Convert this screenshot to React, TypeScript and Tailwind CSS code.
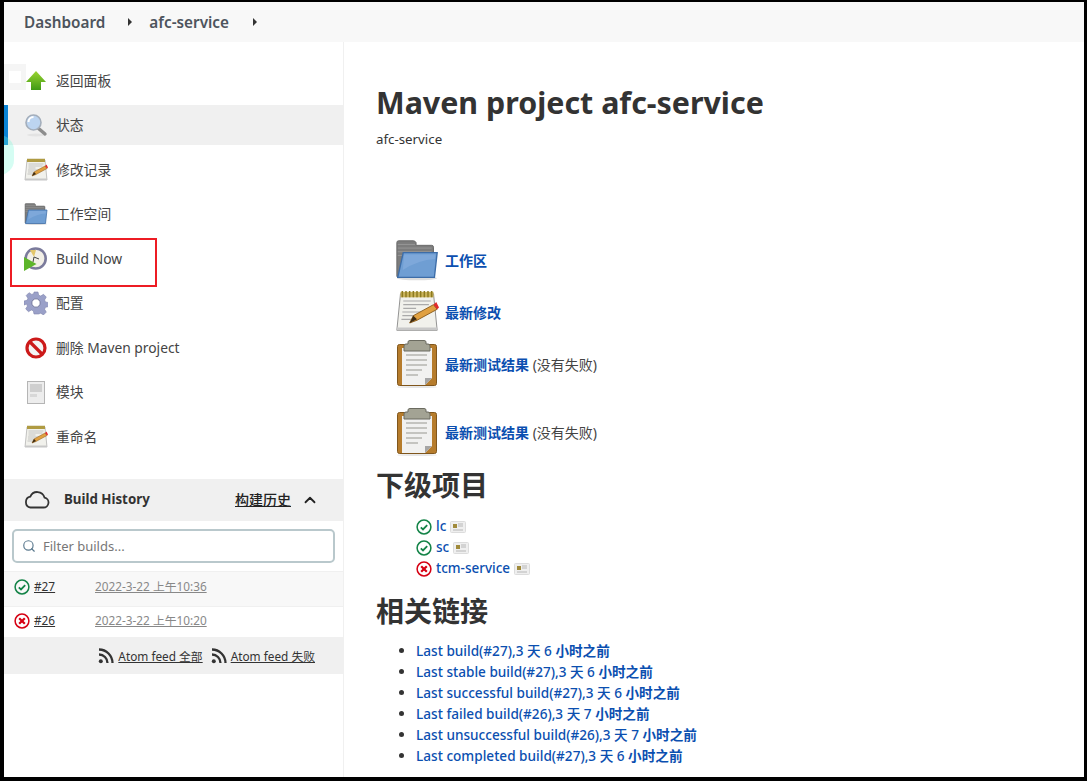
import React from "react";
import { ChevronUp, Search } from "lucide-react";

const font = { fontFamily: '"Noto Sans", "Noto Sans CJK SC", sans-serif' };

function Folder({ size = 24 }: { size?: number }) {
  return (
    <svg width={size} height={size} viewBox="0 0 48 48">
      <ellipse cx="24" cy="44" rx="22" ry="2" fill="#ddd" />
      <path d="M2 5q0-2 2-2h16q2 0 3 2v3h17q2 0 2 2v32H2z" fill="#7c7c7c" stroke="#666" />
      <path d="M3 7h19M3 11h37M3 15h37M3 19h37" stroke="#999" strokeWidth="1" />
      <path d="M9 16h37l-3 27H3z" fill="#6f9ed3" stroke="#3d6da8" strokeWidth="1.5" />
      <path d="M10 18h34l-.5 5q-18 1-35 12z" fill="#7ea8da" />
    </svg>
  );
}

function Notepad({ size = 24 }: { size?: number }) {
  return (
    <svg width={size} height={size} viewBox="0 0 48 48">
      <path d="M6 4h36l4 40H2z" fill="#f1f1ec" stroke="#8a8a8a" />
      <path d="M2 41h44v3H2z" fill="#c8c8c8" />
      <rect x="6" y="2" width="36" height="6" fill="#c9b25a" />
      <path d="M8 1v7M12 1v7M16 1v7M20 1v7M24 1v7M28 1v7M32 1v7M36 1v7M40 1v7" stroke="#8c7a20" strokeWidth="1.6" />
      <path d="M9 12h30M9 16h28M9 20h14M8 24h22M8 28h16M7 32h14" stroke="#aaa" strokeWidth="1.2" />
      <path d="M16 36l4-8 22-12 4 5-22 12z" fill="#e0a040" stroke="#8a5a18" />
      <path d="M42 16l4 5 2-2-3-6z" fill="#e02a2a" />
      <path d="M16 36l4-8 4 4z" fill="#3a2a14" />
    </svg>
  );
}

function Clipboard() {
  return (
    <svg width="48" height="48" viewBox="0 0 48 48" className="-mx-[2px] shrink-0">
      <ellipse cx="24" cy="47" rx="20" ry="1" fill="#e6e6e6" />
      <rect x="4.500" y="4.500" width="39" height="41" rx="2" fill="#b67c2c" stroke="#80561c" />
      <path d="M9 8h30v30l-7 7H9z" fill="#f1f1f0" />
      <path d="M32 45l7-7h-7z" fill="#a5a5a5" />
      <path d="M13 15h21M13 20h21M13 25h21M13 30h16M13 35h12" stroke="#c4c4c0" strokeWidth="2" />
      <path d="M15 2q0-1.500 2-1.500h14q2 0 2 1.500v2h2q2 0 2 2v5H11V6q0-2 2-2h2z" fill="#a3a394" stroke="#6b6b60" />
    </svg>
  );
}

function ArrowUp() {
  return (
    <svg width="24" height="24" viewBox="0 0 24 24">
      <defs>
        <linearGradient id="gu" x1="0" y1="0" x2="0" y2="1">
          <stop offset="0" stopColor="#9bd432" />
          <stop offset="1" stopColor="#3f9a15" />
        </linearGradient>
      </defs>
      <path d="M12 2l10 11h-5v8H7v-8H2z" fill="url(#gu)" />
    </svg>
  );
}

function Magnifier() {
  return (
    <svg width="24" height="24" viewBox="0 0 24 24">
      <ellipse cx="12" cy="22" rx="9" ry="1.500" fill="#e3e3e3" />
      <path d="M14 15l7 6" stroke="#8d8d8d" strokeWidth="3.400" strokeLinecap="round" />
      <circle cx="9.500" cy="9.500" r="7.500" fill="#bcd4f0" stroke="#a4aebb" strokeWidth="1.600" />
      <path d="M4.500 9a5 5 0 0 1 5-5" stroke="#fff" strokeWidth="2" fill="none" />
    </svg>
  );
}

function BuildClock() {
  return (
    <svg width="24" height="24" viewBox="0 0 24 24">
      <circle cx="11.700" cy="11.500" r="10" fill="#f2efe6" stroke="#7b7b9c" strokeWidth="2.600" />
      <path d="M6 3h6l-2 7z" fill="#e3c66a" />
      <path d="M10 10l5 2M10 10l-1 5" stroke="#444" strokeWidth="1" />
      <path d="M0 10l12.500 7L0 24z" fill="#5db52a" />
    </svg>
  );
}

function Gear() {
  return (
    <svg width="24" height="24" viewBox="0 0 24 24">
      <path
        d="M10 1h4l.7 3.200 2 .8 2.800-1.700 2.800 2.800-1.700 2.800.8 2 3.100.7v4l-3.100.7-.8 2 1.700 2.800-2.800 2.800-2.800-1.700-2 .8L14 23h-4l-.7-3.200-2-.8-2.800 1.700-2.800-2.800 1.700-2.800-.8-2L0 14v-4l3.100-.7.800-2L2.200 4.500l2.800-2.800 2.800 1.700 2-.8z"
        fill="#9aa0c8"
        stroke="#8085ad"
        strokeWidth=".6"
      />
      <circle cx="12" cy="12" r="4.200" fill="#fff" stroke="#777ba0" />
    </svg>
  );
}

function NoEntry() {
  return (
    <svg width="24" height="24" viewBox="0 0 24 24">
      <circle cx="12" cy="12" r="9" fill="#f4f4f4" stroke="#cc1a1a" strokeWidth="3.200" />
      <path d="M5.500 5.500l13 13" stroke="#cc1a1a" strokeWidth="3.200" />
    </svg>
  );
}

function ModuleIcon() {
  return (
    <svg width="24" height="24" viewBox="0 0 24 24">
      <rect x="3.500" y="1.500" width="17" height="22" fill="#ededed" stroke="#b5b5b5" />
      <rect x="6" y="4" width="12" height="8" fill="#cfcfcf" />
      <rect x="6" y="14" width="7" height="3" fill="#d8d8d8" />
    </svg>
  );
}

function Cloud() {
  return (
    <svg width="26" height="18" viewBox="0 0 26 18" fill="none">
      <path
        d="M6.500 16.500h13a5 5 0 0 0 1-9.900 7.500 7.500 0 0 0-14.200-.9A5.500 5.500 0 0 0 6.500 16.500z"
        stroke="#333"
        strokeWidth="1.800"
      />
    </svg>
  );
}

function StatusOk({ className = "" }: { className?: string }) {
  return (
    <svg width="16" height="16" viewBox="0 0 16 16" fill="none" className={"shrink-0 " + className}>
      <circle cx="8" cy="8" r="6.900" stroke="#138347" strokeWidth="1.500" />
      <path d="M4.800 8.300l2.200 2.100 4.200-4.300" stroke="#138347" strokeWidth="1.800" />
    </svg>
  );
}

function StatusFail({ className = "" }: { className?: string }) {
  return (
    <svg width="16" height="16" viewBox="0 0 16 16" fill="none" className={"shrink-0 " + className}>
      <circle cx="8" cy="8" r="6.900" stroke="#d60013" strokeWidth="1.500" />
      <path d="M5.200 5.200l5.600 5.600M10.800 5.200l-5.600 5.600" stroke="#d60013" strokeWidth="2.200" />
    </svg>
  );
}

function Rss() {
  return (
    <svg width="16" height="16" viewBox="0 0 16 16" fill="none" className="shrink-0">
      <circle cx="2.800" cy="13.200" r="2" fill="#333" />
      <path d="M1 6.500a8.500 8.500 0 0 1 8.500 8.500" stroke="#333" strokeWidth="2.300" />
      <path d="M1 1.500A13.500 13.500 0 0 1 14.500 15" stroke="#333" strokeWidth="2.300" />
    </svg>
  );
}

function Badge() {
  return (
    <svg width="16" height="12" viewBox="0 0 16 12" className="shrink-0">
      <rect x=".5" y=".5" width="15" height="11" rx="1" fill="#efefef" stroke="#dcdcdc" />
      <rect x="3" y="3" width="4" height="4" fill="#a08a3a" />
      <path d="M8 3h5M8 5h5M3 9h10" stroke="#aaa" strokeWidth=".8" />
    </svg>
  );
}

const tasks: { icon: React.ReactNode; label: string; active?: boolean }[] = [
  { icon: <ArrowUp />, label: "返回面板" },
  { icon: <Magnifier />, label: "状态", active: true },
  { icon: <Notepad />, label: "修改记录" },
  { icon: <Folder />, label: "工作空间" },
  { icon: <BuildClock />, label: "Build Now" },
  { icon: <Gear />, label: "配置" },
  { icon: <NoEntry />, label: "删除 Maven project" },
  { icon: <ModuleIcon />, label: "模块" },
  { icon: <Notepad />, label: "重命名" },
];

const links = [
  "Last build(#27),3 天 6 ",
  "Last stable build(#27),3 天 6 ",
  "Last successful build(#27),3 天 6 ",
  "Last failed build(#26),3 天 7 ",
  "Last unsuccessful build(#26),3 天 7 ",
  "Last completed build(#27),3 天 6 ",
];

export default function App() {
  return (
    <div style={font} className="h-[781px] w-[1087px] overflow-hidden bg-black pt-[2px] pl-[4px] pr-[3px] pb-[4px]">
      <div className="relative flex h-full flex-col overflow-hidden bg-white text-[#333]">
        <header className="flex h-[40px] shrink-0 items-center bg-[#f8f8f8] pl-[20px] text-[15.300px] font-semibold text-[#4d545d]">
          <span>Dashboard</span>
          <span className="ml-[23px] h-0 w-0 border-y-[4px] border-l-[4px] border-y-transparent border-l-[#333]" />
          <span className="ml-[17px]">afc-service</span>
          <span className="ml-[24px] h-0 w-0 border-y-[4px] border-l-[4px] border-y-transparent border-l-[#333]" />
        </header>
        <div className="flex min-h-0 flex-1">
          <aside className="w-[340px] shrink-0 border-r border-[#f0f0f0] pt-[18.600px]">
            <nav className="flex flex-col gap-[4.500px]">
              {tasks.map((t) => (
                <div
                  key={t.label}
                  className={
                    t.active
                      ? "flex h-[40px] items-center gap-[8px] border-l-[4px] border-[#0a84d6] bg-[#f0f0f0] pl-[16px] text-[13.800px] text-[#444]"
                      : "flex h-[40px] items-center gap-[8px] pl-[20px] text-[13.800px] text-[#444]"
                  }
                >
                  {t.icon}
                  <span className="pt-[1px]">{t.label}</span>
                </div>
              ))}
            </nav>
            <div className="mt-[22.400px] flex h-[42px] items-center bg-[#f0f0f0] pl-[20px] pr-[24px] text-[13.300px]">
              <Cloud />
              <span className="ml-[14px] -mt-[1px] font-bold text-[#333]">Build History</span>
              <span className="ml-auto -mt-[1px] text-[14px] font-medium text-[#222] underline">构建历史</span>
              <ChevronUp size={18} strokeWidth={2.400} className="ml-[10px] text-[#222]" />
            </div>
            <div className="px-[8px] pt-[8px] pb-[8px]">
              <div className="flex h-[34px] w-[323px] items-center rounded-[5px] border-2 border-[#b9c8cc] bg-white pl-[8px] text-[13px] text-[#777]">
                <Search size={14} strokeWidth={2} className="text-[#5c7a8f]" />
                <span className="ml-[7px] pt-[1px]">Filter builds...</span>
              </div>
            </div>
            <div className="flex h-[35px] items-start border-t border-[#f0f0f0] bg-[#f8f8f8] pl-[10px] pt-[6px] text-[11.800px]">
              <StatusOk className="mt-[1px]" />
              <span className="ml-[4px] w-[61px] leading-[16px] underline">#27</span>
              <span className="leading-[16px] text-[#888] underline">2022-3-22 上午10:36</span>
            </div>
            <div className="flex h-[31px] items-start border-t border-[#f0f0f0] pl-[10px] pt-[5px] text-[11.800px]">
              <StatusFail className="mt-[1px]" />
              <span className="ml-[4px] w-[61px] leading-[16px] underline">#26</span>
              <span className="leading-[16px] text-[#888] underline">2022-3-22 上午10:20</span>
            </div>
            <div className="flex h-[37px] items-center justify-end bg-[#f0f0f0] pt-[2px] pr-[28px] text-[11.800px] text-[#333]">
              <Rss />
              <span className="ml-[4px] underline">Atom feed 全部</span>
              <span className="ml-[8px]"><Rss /></span>
              <span className="ml-[4px] underline">Atom feed 失败</span>
            </div>
          </aside>
          <main className="min-w-0 flex-1 pl-[32px]">
            <h1 className="mt-[41px] text-[30.400px] leading-[40px] font-bold text-[#333]">Maven project afc-service</h1>
            <p className="mt-[6px] text-[13.300px] leading-[20px] text-[#333]">afc-service</p>
            <div className="mt-[85px] ml-[19px] flex flex-col">
              {[
                { icon: <Folder size={44} />, label: "工作区", h: 52 },
                { icon: <Notepad size={44} />, label: "最新修改", h: 52 },
                { icon: <Clipboard />, label: "最新测试结果", note: " (没有失败)", h: 68, pb: 16 },
                { icon: <Clipboard />, label: "最新测试结果", note: " (没有失败)", h: 52 },
              ].map((r, i) => (
                <div key={i} style={{ height: r.h, paddingBottom: r.pb ?? 0 }} className="flex items-center gap-[6px] text-[14px]">
                  {r.icon}
                  <span>
                    <span className="font-bold text-[#0b4fb0]">{r.label}</span>
                    {r.note && <span className="text-[#444]">{r.note}</span>}
                  </span>
                </div>
              ))}
            </div>
            <h2 className="mt-[9px] text-[28px] leading-[36px] font-bold text-[#333]">下级项目</h2>
            <div className="mt-[13px] ml-[40px] flex flex-col text-[13.500px] font-medium text-[#0b4fb0]">
              {[
                { n: "lc", ok: true },
                { n: "sc", ok: true },
                { n: "tcm-service", ok: false },
              ].map((p) => (
                <div key={p.n} className="flex h-[21px] items-center gap-[4px]">
                  {p.ok ? <StatusOk /> : <StatusFail />}
                  <span>{p.n}</span>
                  <Badge />
                </div>
              ))}
            </div>
            <h2 className="mt-[14px] text-[28px] leading-[36px] font-bold text-[#333]">相关链接</h2>
            <ul className="mt-[11px] ml-[40px] list-disc text-[13.600px] font-medium text-[#0b4fb0] marker:text-[#333]">
              {links.map((l) => (
                <li key={l} className="h-[21px] leading-[21px]">
                  {l}
                  <span className="font-bold">小时之前</span>
                </li>
              ))}
            </ul>
          </main>
        </div>
        <div className="absolute top-[62px] left-0 h-[26px] w-[22px] bg-[#f5f5f5]">
          <div className="mx-auto mt-[7px] h-[12px] w-[12px] bg-white" />
        </div>
        <div className="absolute top-[133px] -left-[20px] h-[40px] w-[30px] rounded-full bg-[#73f7d8]/30" />
        <div className="absolute top-[236px] left-[6px] h-[49px] w-[147px] border-2 border-[#ed1c24]" />
      </div>
    </div>
  );
}
